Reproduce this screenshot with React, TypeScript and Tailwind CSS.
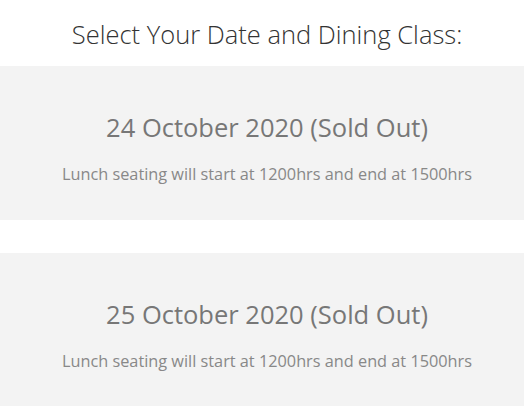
const sessions = [
  { date: "24 October 2020", status: "Sold Out" },
  { date: "25 October 2020", status: "Sold Out" },
];

export default function App() {
  return (
    <main className="min-h-screen bg-white font-['Open_Sans',sans-serif]">
      <h1 className="pt-[19px] pb-[17px] pl-[10px] text-center text-[25.5px] font-light leading-[30px] text-[#333]">
        Select Your Date and Dining Class:
      </h1>
      <div className="flex flex-col gap-[33px]">
        {sessions.map((s) => (
          <section key={s.date} className="h-[154px] bg-[#f3f3f3] pt-[46px] pl-[10px] text-center">
            <h2 className="text-[25.5px] leading-[30px] text-[#777]">
              {s.date} ({s.status})
            </h2>
            <p className="mt-[22px] text-[16.3px] leading-[20px] text-[#888]">
              Lunch seating will start at 1200hrs and end at 1500hrs
            </p>
          </section>
        ))}
      </div>
    </main>
  );
}
